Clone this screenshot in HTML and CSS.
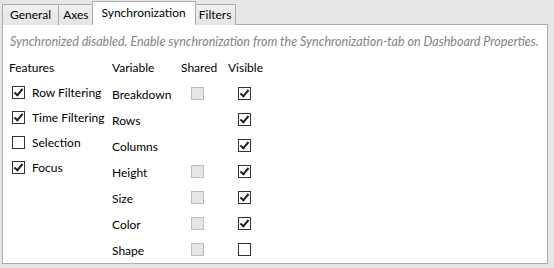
FILE: index.html
```html
<!DOCTYPE html>
<html>
<head>
    <title>Synchronization</title>
    <link rel="stylesheet" href="styles.css">
</head>
<body>
    <div class="tabs">
        <div class="tab">General</div>
        <div class="tab">Axes</div>
        <div class="tab active">Synchronization</div>
        <div class="tab">Filters</div>
    </div>
    <div class="panel">
        <p class="notice">Synchronized disabled. Enable synchronization from the Synchronization-tab on Dashboard Properties.</p>
        <div class="columns">
            <div class="features">
                <div class="head">Features</div>
                <label class="feature"><span class="box checked"></span>Row Filtering</label>
                <label class="feature"><span class="box checked"></span>Time Filtering</label>
                <label class="feature"><span class="box"></span>Selection</label>
                <label class="feature"><span class="box checked"></span>Focus</label>
            </div>
            <div class="variables">
                <div class="head">Variable</div>
                <div class="head">Shared</div>
                <div class="head">Visible</div>

                <div class="var">Breakdown</div>
                <div class="cell"><span class="box disabled"></span></div>
                <div class="cell"><span class="box checked"></span></div>

                <div class="var">Rows</div>
                <div class="cell"></div>
                <div class="cell"><span class="box checked"></span></div>

                <div class="var">Columns</div>
                <div class="cell"></div>
                <div class="cell"><span class="box checked"></span></div>

                <div class="var">Height</div>
                <div class="cell"><span class="box disabled"></span></div>
                <div class="cell"><span class="box checked"></span></div>

                <div class="var">Size</div>
                <div class="cell"><span class="box disabled"></span></div>
                <div class="cell"><span class="box checked"></span></div>

                <div class="var">Color</div>
                <div class="cell"><span class="box disabled"></span></div>
                <div class="cell"><span class="box checked"></span></div>

                <div class="var">Shape</div>
                <div class="cell"><span class="box disabled"></span></div>
                <div class="cell"><span class="box"></span></div>
            </div>
        </div>
    </div>
</body>
</html>
```

FILE: styles.css
```css
html, body {
    margin: 0;
    height: 100%;
}
body {
    font-family: Lato, "Noto Sans", sans-serif;
    font-size: 12px;
    color: #000;
    background: #e6e6e6;
    padding: 2px 0 0 2px;
    box-sizing: border-box;
}
.tabs {
    display: flex;
    align-items: flex-end;
    height: 23px;
    position: relative;
    z-index: 1;
}
.tab {
    height: 21px;
    line-height: 20px;
    padding: 0 4px;
    border: 1px solid #acacac;
    border-bottom: none;
    margin-right: -1px;
    background: linear-gradient(#f0f0f0, #e5e5e5);
    box-sizing: border-box;
}
.tab:first-child {
    padding: 0 7px;
}
.tab.active {
    height: 24px;
    line-height: 21px;
    padding: 0 9px;
    background: #fff;
    margin: 0 -2px 0 -1px;
    position: relative;
    z-index: 2;
}
.panel {
    width: 546px;
    height: 240px;
    margin-top: -1px;
    border: 1px solid #acacac;
    background: #fff;
    box-sizing: border-box;
}
.notice {
    margin: 0;
    padding: 9px 0 0 7px;
    color: #838383;
    font-style: italic;
    font-size: 12.5px;
    line-height: 16px;
    white-space: nowrap;
}
.columns {
    display: flex;
    padding: 10px 0 0 6px;
}
.features {
    width: 103px;
}
.head {
    height: 20px;
    line-height: 16px;
}
.feature {
    display: flex;
    align-items: center;
    height: 25px;
}
.feature .box {
    margin: 0 7px 0 3px;
}
.box {
    display: inline-block;
    width: 13px;
    height: 13px;
    border: 1px solid #333;
    background: #fff;
    box-sizing: border-box;
    position: relative;
    flex: none;
}
.box.checked::after {
    content: "";
    position: absolute;
    left: 3px;
    top: 0px;
    width: 3px;
    height: 7px;
    border: solid #222;
    border-width: 0 2px 2px 0;
    transform: rotate(40deg);
}
.box.disabled {
    border-color: #bcbcbc;
    background: #e6e6e6;
}
.variables {
    display: grid;
    grid-template-columns: 69px 47px 40px;
    grid-template-rows: 20px;
    grid-auto-rows: 26px;
}
.var {
    display: flex;
    align-items: center;
    padding-top: 2px;
}
.cell {
    display: flex;
    align-items: center;
    padding-left: 10px;
}
```
